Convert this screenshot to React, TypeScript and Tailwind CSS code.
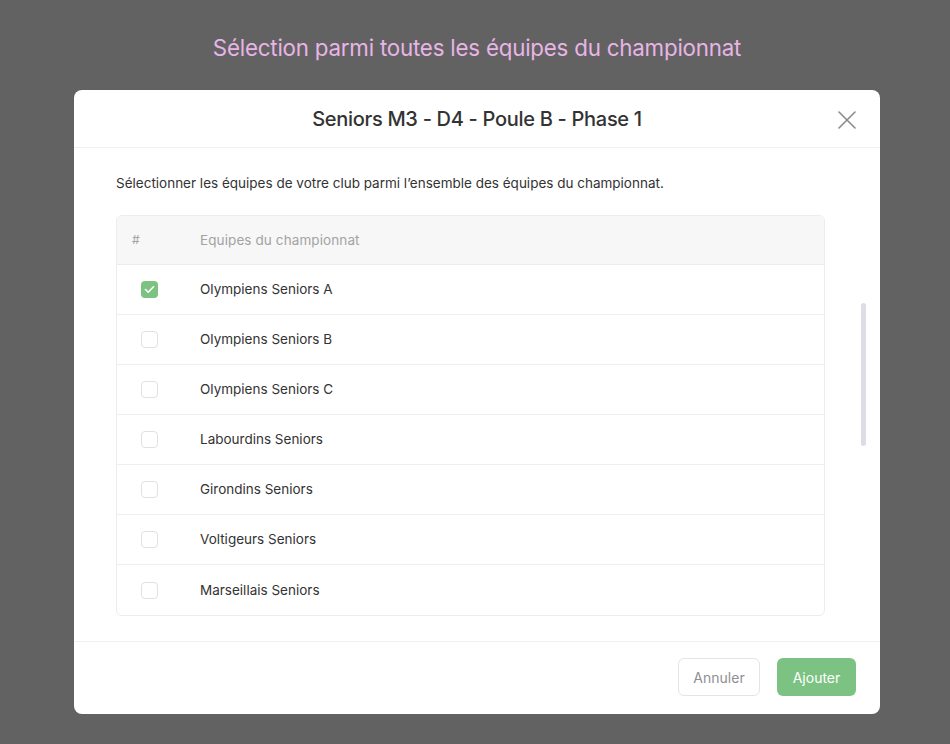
import React, { useState } from "react";

const teams = [
  "Olympiens Seniors A",
  "Olympiens Seniors B",
  "Olympiens Seniors C",
  "Labourdins Seniors",
  "Girondins Seniors",
  "Voltigeurs Seniors",
  "Marseillais Seniors",
];

const App = () => {
  const [selected, setSelected] = useState<number[]>([0]);

  const toggle = (i: number) => {
    setSelected((prev) =>
      prev.includes(i) ? prev.filter((x) => x !== i) : [...prev, i]
    );
  };

  return (
    <div className="w-[950px] h-[744px] bg-[#626262] font-['Inter','Noto_Sans',sans-serif] flex flex-col items-center pl-[4px]">
      <h1 className="mt-[34px] h-[28px] text-[22.3px] leading-[28px] text-[#e8b5e6] tracking-[-0.2px]">
        Sélection parmi toutes les équipes du championnat
      </h1>

      {/* modal */}
      <div className="mt-[28px] w-[806px] h-[624px] bg-white rounded-[8px] flex flex-col">
        <div className="relative h-[58px] shrink-0 border-b border-[#f0f0f0] flex items-center justify-center">
          <h2 className="text-[20px] text-[#333333] font-medium tracking-[-0.3px]">
            Seniors M3 - D4 - Poule B - Phase 1
          </h2>
          <button className="absolute right-[23px] top-[20px] w-[20px] h-[20px] flex items-center justify-center">
            <svg width="18" height="18" viewBox="0 0 18 18" fill="none">
              <path d="M1 1L17 17M17 1L1 17" stroke="#8a8a8a" strokeWidth="1.6" strokeLinecap="round" />
            </svg>
          </button>
        </div>

        <div className="relative flex-1 flex">
          <div className="flex-1 pl-[42px] pr-[55px] pt-[26px]">
            <p className="text-[13.5px] leading-[18px] text-[#333333]">
              Sélectionner les équipes de votre club parmi l’ensemble des équipes du championnat.
            </p>
            <div className="mt-[23px] border border-[#ececec] rounded-[6px] overflow-hidden">
              <div className="h-[49px] bg-[#f7f7f7] flex items-center border-b border-[#ececec] text-[13.5px] text-[#a3a3a3]">
                <span className="w-[83px] pl-[15px] text-[12px]">#</span>
                <span className="tracking-[0.1px]">Equipes du championnat</span>
              </div>
              {teams.map((team, i) => {
                const on = selected.includes(i);
                return (
                  <div
                    key={team}
                    onClick={() => toggle(i)}
                    className={`h-[50px] flex items-center cursor-pointer text-[13.5px] text-[#333333] ${i < teams.length - 1 ? "border-b border-[#efefef]" : ""}`}
                  >
                    <span className="w-[83px] pl-[24px] flex">
                      {on ? (
                        <span className="w-[17px] h-[17px] rounded-[4px] bg-[#7cc383] flex items-center justify-center">
                          <svg width="11" height="9" viewBox="0 0 11 9" fill="none">
                            <path d="M1.5 4.5L4.2 7.2L9.5 1.8" stroke="white" strokeWidth="1.6" strokeLinecap="round" strokeLinejoin="round" />
                          </svg>
                        </span>
                      ) : (
                        <span className="w-[17px] h-[17px] rounded-[4px] border border-[#dfe1e6] bg-white" />
                      )}
                    </span>
                    <span>{team}</span>
                  </div>
                );
              })}
            </div>
          </div>
          {/* scrollbar */}
          <div className="absolute right-[14px] top-[155px] w-[5px] h-[143px] rounded-full bg-[#dcdde6]" />
        </div>

        <div className="h-[73px] shrink-0 border-t border-[#f0f0f0] flex items-center justify-end gap-[17px] pr-[24px] pb-[2px]">
          <button className="h-[38px] w-[82px] rounded-[6px] border border-[#e2e4e9] text-[14px] text-[#8f8f96]">
            Annuler
          </button>
          <button className="h-[38px] w-[79px] rounded-[6px] bg-[#7cc383] text-[14px] text-white">
            Ajouter
          </button>
        </div>
      </div>
    </div>
  );
};

export default App;
